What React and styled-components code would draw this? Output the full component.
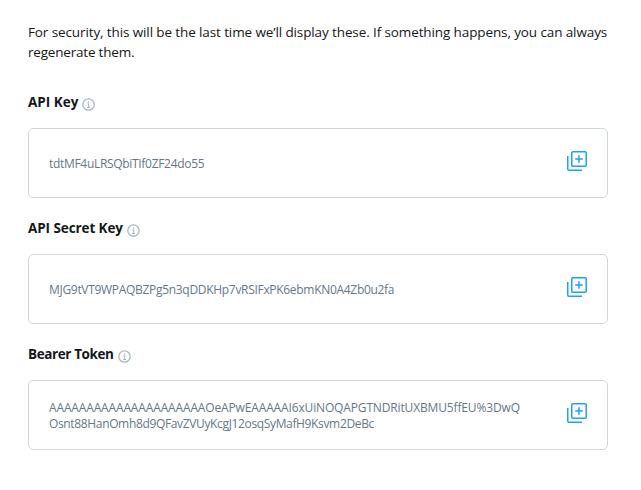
import React from 'react';
import styled, { createGlobalStyle } from 'styled-components';

const Global = createGlobalStyle`
  body { margin: 0; background: #fff; }
`;
const Page = styled.main`
  box-sizing: border-box;
  width: 641px;
  height: 490px;
  padding: 22px 33px 0 28px;
  font-family: "Open Sans", "Noto Sans", sans-serif;
  color: #14171a;
`;
const Line = styled.div`
  font-size: 13.5px;
  line-height: 20px;
  white-space: nowrap;
  width: max-content;
  letter-spacing: ${p => p.$ls || 0}px;
`;
const Field = styled.section`
  margin-top: ${p => (p.$first ? 30 : 20)}px;
`;
const Label = styled.div`
  display: flex;
  align-items: center;
  gap: 4px;
  height: 20px;
  margin-bottom: 16px;
  font-size: 13.5px;
  font-weight: 700;
  white-space: nowrap;
  letter-spacing: ${p => p.$ls || 0}px;
  svg { margin-top: 5px; }
`;
const Box = styled.div`
  box-sizing: border-box;
  width: 580px;
  height: 70px;
  display: flex;
  align-items: center;
  justify-content: space-between;
  padding: 0 20px;
  border: 1px solid #ccd6dd;
  border-radius: 5px;
  > svg { margin-bottom: 4px; }
`;
const Value = styled.div`
  padding-top: 2px;
  font-size: 12px;
  line-height: 16px;
  color: #657786;
`;
const Row = styled.div`
  width: max-content;
  white-space: nowrap;
  letter-spacing: ${p => p.$ls || 0}px;
`;
const Info = () => (
  <svg width="13" height="13" viewBox="0 0 13 13" fill="none" stroke="#aab8c2" strokeWidth="1.3">
    <circle cx="6.5" cy="6.5" r="5.7" />
    <path d="M5.2 5.8h1.5v3.6M5 9.5h3M6.5 3.2v1.3" strokeWidth="1.1" />
  </svg>
);
const Copy = () => (
  <svg width="20" height="20" viewBox="0 0 20 20" fill="none" stroke="#1da1f2" strokeWidth="1.5">
    <rect x="4.75" y="0.75" width="14.5" height="14.5" rx="1.2" />
    <path d="M0.75 5v13a1.25 1.25 0 0 0 1.25 1.25h13M12 4.2v7.6M8.2 8h7.6" />
  </svg>
);
const fields = [
  {
    label: 'API Key',
    spacing: 0,
    rows: [{ text: 'tdtMF4uLRSQbiTIf0ZF24do55', spacing: -0.31 }],
  },
  {
    label: 'API Secret Key',
    spacing: -0.09,
    rows: [{ text: 'MJG9tVT9WPAQBZPg5n3qDDKHp7vRSIFxPK6ebmKN0A4Zb0u2fa', spacing: -0.305 }],
  },
  {
    label: 'Bearer Token',
    spacing: -0.4,
    rows: [
      { text: 'AAAAAAAAAAAAAAAAAAAAAOeAPwEAAAAAI6xUiNOQAPGTNDRitUXBMU5ffEU%3DwQ', spacing: -0.145 },
      { text: 'Osnt88HanOmh8d9QFavZVUyKcgJ12osqSyMafH9Ksvm2DeBc', spacing: -0.35 },
    ],
  },
];

export default function App() {
  return (
    <Page>
      <Global />
      <Line $ls={-0.112}>For security, this will be the last time we’ll display these. If something happens, you can always</Line>
      <Line $ls={-0.2}>regenerate them.</Line>
      {fields.map((f, i) => (
        <Field key={f.label} $first={i === 0}>
          <Label $ls={f.spacing}>{f.label}<Info /></Label>
          <Box>
            <Value>{f.rows.map(r => <Row key={r.text} $ls={r.spacing}>{r.text}</Row>)}</Value>
            <Copy />
          </Box>
        </Field>
      ))}
    </Page>
  );
}
